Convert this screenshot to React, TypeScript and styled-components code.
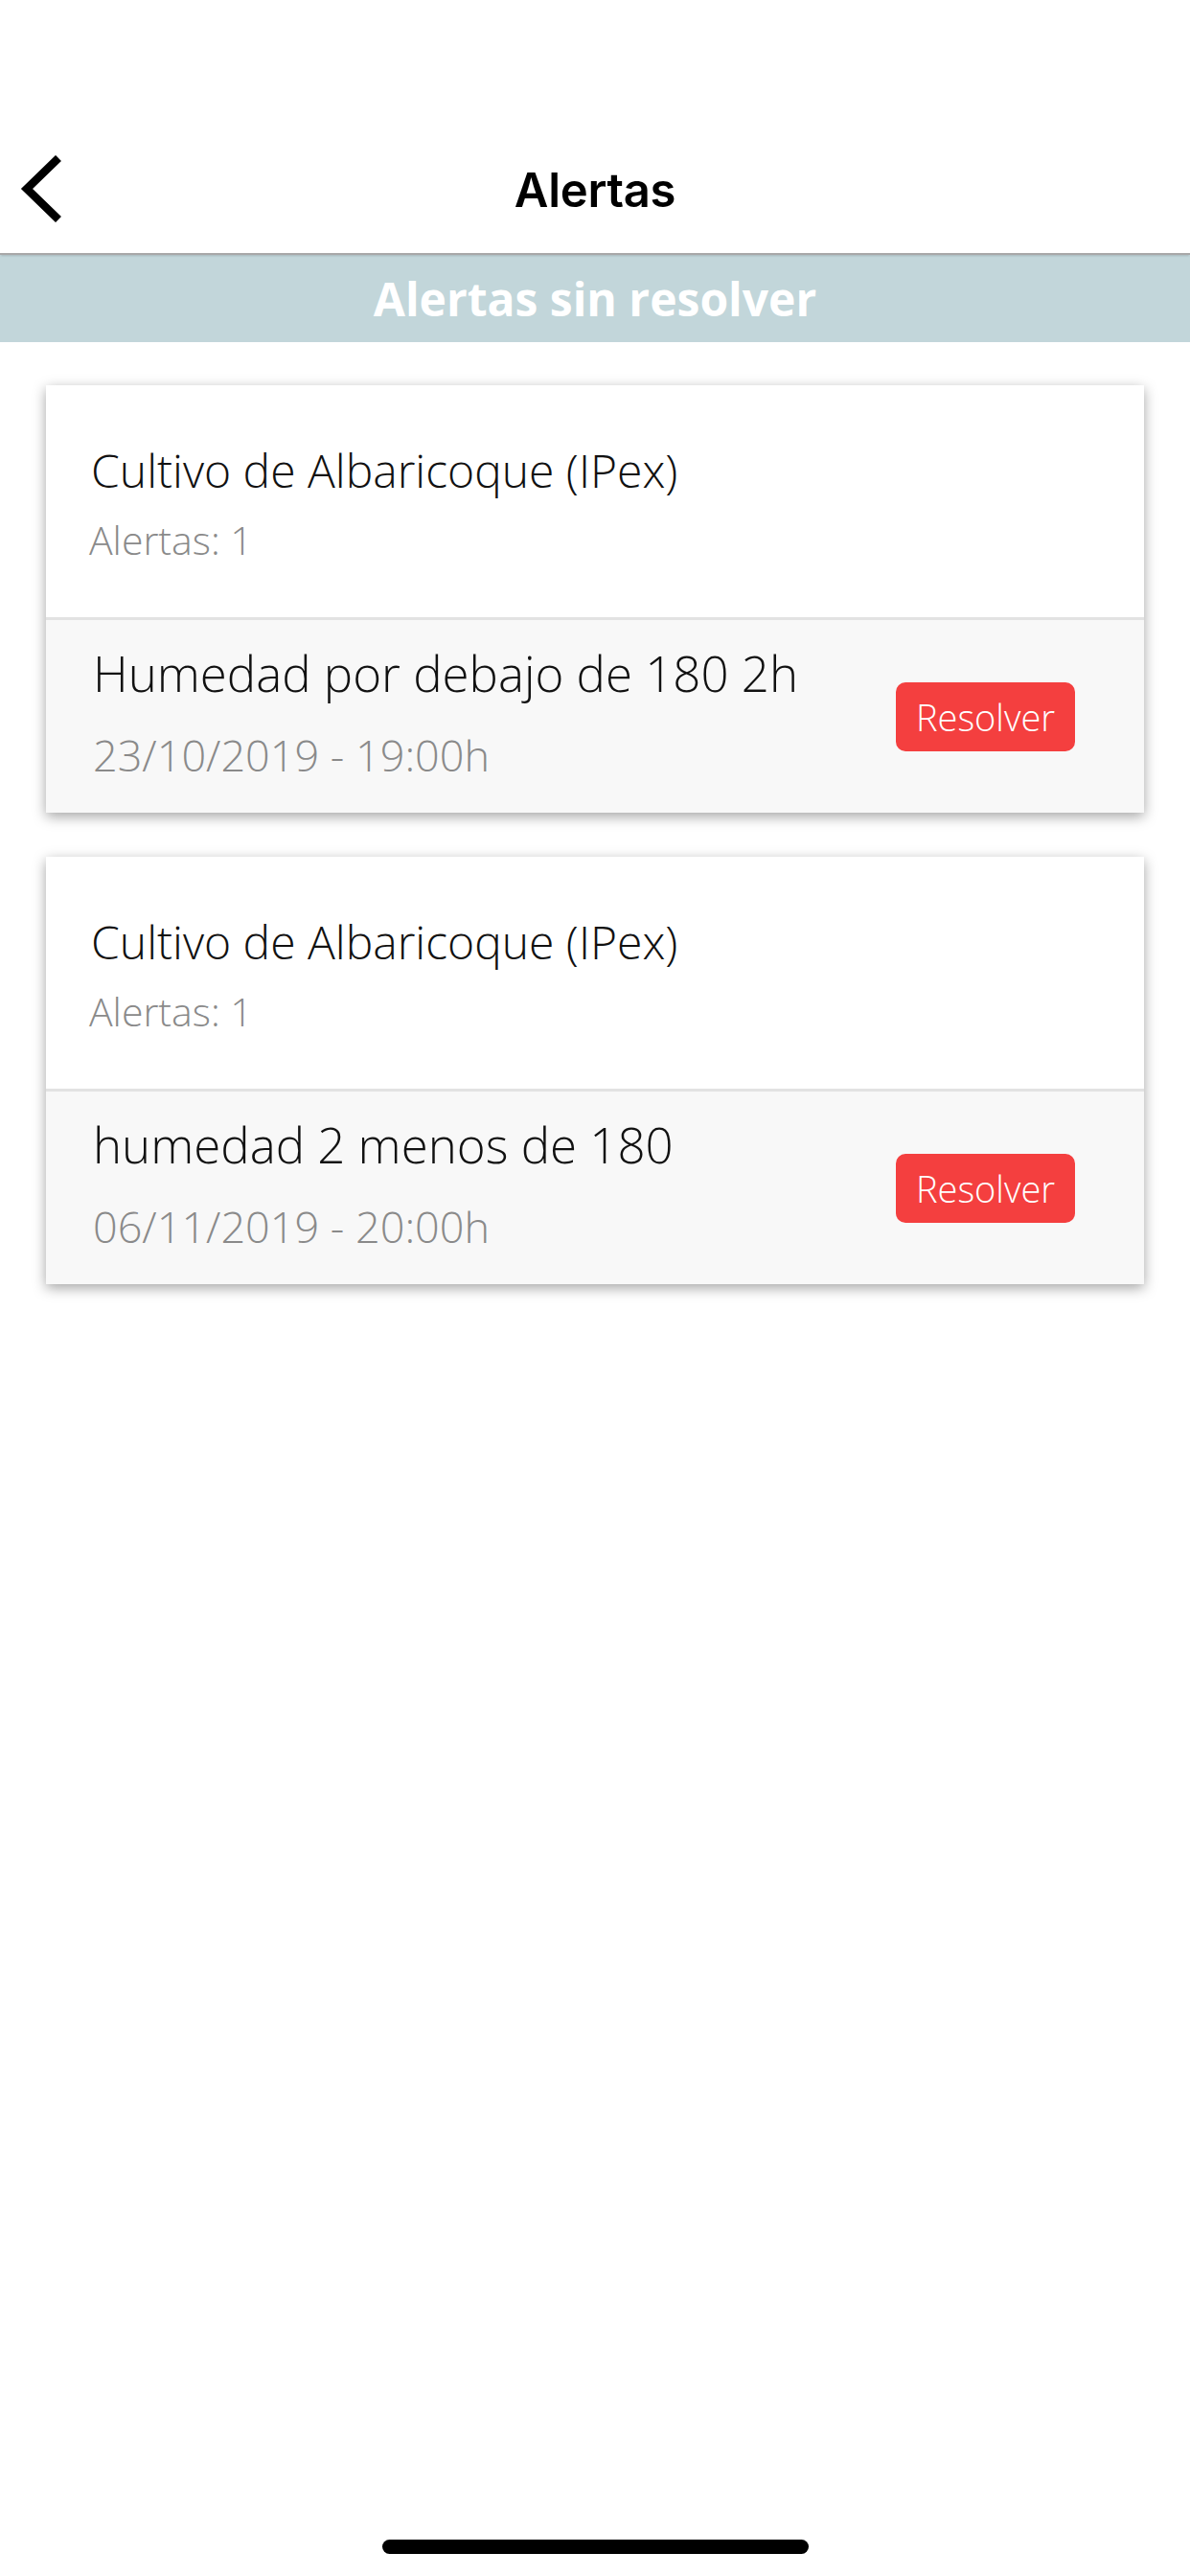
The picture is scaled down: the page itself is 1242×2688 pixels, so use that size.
import React from 'react';
import styled, { createGlobalStyle } from 'styled-components';

interface Alert {
    id: number,
    crop: string,
    count: number,
    message: string,
    date: string,
}

const alerts: Alert[] = [
    { id: 1, crop: 'Cultivo de Albaricoque (IPex)', count: 1, message: 'Humedad por debajo de 180 2h', date: '23/10/2019 - 19:00h' },
    { id: 2, crop: 'Cultivo de Albaricoque (IPex)', count: 1, message: 'humedad 2 menos de 180', date: '06/11/2019 - 20:00h' },
];

const GlobalStyle = createGlobalStyle`
  html, body {
    margin: 0;
    padding: 0;
    background: #ffffff;
  }
  body {
    font-family: "Open Sans", "Liberation Sans", sans-serif;
  }
`;

const App: React.FC = () => {
    return (
        <Screen>
            <GlobalStyle />
            <StatusBar />
            <Header>
                <BackButton aria-label="Volver">
                    <svg width="46" height="70" viewBox="0 0 46 70" fill="none">
                        <path d="M41 3 L8 35 L41 67" stroke="#000" strokeWidth="8.5" strokeLinecap="butt" strokeLinejoin="miter" />
                    </svg>
                </BackButton>
                <Title>Alertas</Title>
            </Header>
            <Banner>Alertas sin resolver</Banner>
            <List>
                {alerts.map((a) => (
                    <Card key={a.id}>
                        <CardHead>
                            <CropName>{a.crop}</CropName>
                            <CountText>Alertas: {a.count}</CountText>
                        </CardHead>
                        <AlertRow>
                            <AlertInfo>
                                <Message>{a.message}</Message>
                                <DateText>{a.date}</DateText>
                            </AlertInfo>
                            <ResolveButton>Resolver</ResolveButton>
                        </AlertRow>
                    </Card>
                ))}
            </List>
            <HomeBar />
        </Screen>
    );
}

const Screen = styled.div`
    position: relative;
    width: 1242px;
    height: 2688px;
    background: #ffffff;
    overflow: hidden;
`;

const StatusBar = styled.div`
    height: 132px;
`;

const Header = styled.div`
    position: relative;
    height: 132px;
    display: flex;
    align-items: center;
    justify-content: center;
    border-bottom: 2px solid #a8a8a8;
    box-shadow: 0 2px 2px -1px rgba(0, 0, 0, 0.15);
`;

const BackButton = styled.button`
    position: absolute;
    left: 20px;
    top: 30px;
    background: none;
    border: none;
    padding: 0;
    display: flex;
`;

const Title = styled.h1`
    margin: 0;
    font-family: Inter, "Liberation Sans", sans-serif;
    font-weight: 600;
    font-size: 49px;
    color: #000;
    letter-spacing: -0.3px;
`;

const Banner = styled.div`
    height: 91px;
    display: flex;
    align-items: center;
    justify-content: center;
    background: #c2d6da;
    color: #ffffff;
    font-weight: 700;
    font-size: 48px;
`;

const List = styled.div`
    display: flex;
    flex-direction: column;
    gap: 46px;
    padding: 45px 48px;
`;

const Card = styled.div`
    background: #ffffff;
    box-shadow: 0 4px 13px rgba(0, 0, 0, 0.36);
`;

const CardHead = styled.div`
    display: flex;
    flex-direction: column;
    gap: 12px;
    padding: 56px 47px 53px 45px;
    border-bottom: 3px solid #e2e2e2;
`;

const CropName = styled.div`
    font-weight: 300;
    font-size: 48px;
    color: #111;
    padding-left: 2px;
`;

const CountText = styled.div`
    font-weight: 300;
    font-size: 41px;
    color: #8a8a8a;
`;

const AlertRow = styled.div`
    display: flex;
    align-items: center;
    justify-content: space-between;
    background: #f8f8f8;
    padding: 20px 72px 30px 49px;
`;

const AlertInfo = styled.div`
    display: flex;
    flex-direction: column;
    gap: 20px;
`;

const Message = styled.div`
    font-weight: 300;
    font-size: 51px;
    color: #111;
`;

const DateText = styled.div`
    font-weight: 300;
    font-size: 45px;
    color: #8a8a8a;
`;

const ResolveButton = styled.button`
    width: 187px;
    height: 72px;
    margin-top: 10px;
    border: none;
    border-radius: 10px;
    background: #f43f3f;
    color: #ffffff;
    font-family: "Open Sans", "Liberation Sans", sans-serif;
    font-weight: 300;
    font-size: 38px;
    padding: 0;
`;

const HomeBar = styled.div`
    position: absolute;
    left: 399px;
    bottom: 23px;
    width: 445px;
    height: 15px;
    border-radius: 8px;
    background: #000;
`;

export default App;
